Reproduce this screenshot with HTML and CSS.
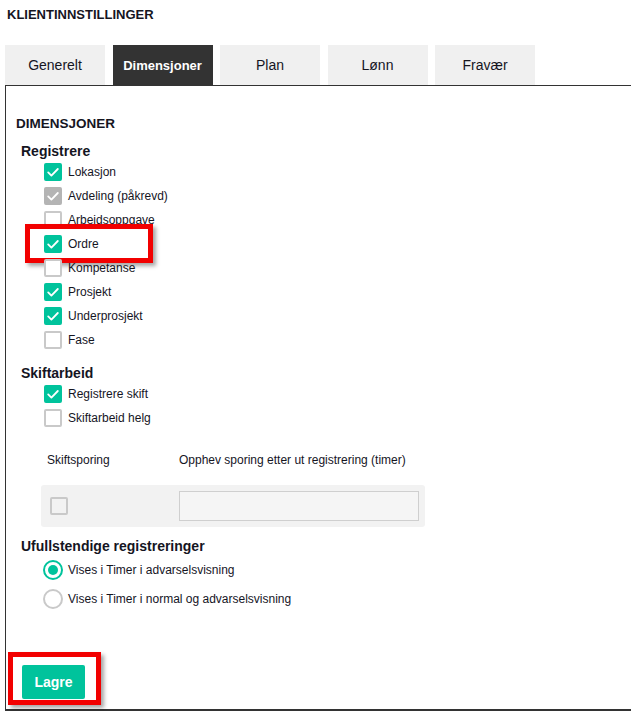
FILE: index.html
```html
<!DOCTYPE html>
<html lang="no">
<head>
  <meta charset="UTF-8">
  <meta name="viewport" content="width=device-width, initial-scale=1.0">
  <title>Klientinnstillinger</title>
  <link rel="stylesheet" href="styles.css">
</head>
<body>
  <!-- Page title -->
  <h1 class="page-title">KLIENTINNSTILLINGER</h1>

  <!-- Tabs -->
  <nav class="tabs">
    <a class="tab">Generelt</a>
    <a class="tab active">Dimensjoner</a>
    <a class="tab">Plan</a>
    <a class="tab">Lønn</a>
    <a class="tab">Fravær</a>
  </nav>

  <!-- Tab panel -->
  <main class="panel">
    <h2 class="panel-title">DIMENSJONER</h2>

    <section class="group">
      <h3 class="group-title">Registrere</h3>
      <label class="check-row"><span class="box checked"><svg viewBox="0 0 18 18"><path d="M4.2 9.4l3.2 3.2L13.8 6"/></svg></span>Lokasjon</label>
      <label class="check-row"><span class="box locked"><svg viewBox="0 0 18 18"><path d="M4.2 9.4l3.2 3.2L13.8 6"/></svg></span>Avdeling (påkrevd)</label>
      <label class="check-row"><span class="box"></span>Arbeidsoppgave</label>
      <label class="check-row"><span class="box checked"><svg viewBox="0 0 18 18"><path d="M4.2 9.4l3.2 3.2L13.8 6"/></svg></span>Ordre<span class="highlight ordre"></span></label>
      <label class="check-row"><span class="box"></span>Kompetanse</label>
      <label class="check-row"><span class="box checked"><svg viewBox="0 0 18 18"><path d="M4.2 9.4l3.2 3.2L13.8 6"/></svg></span>Prosjekt</label>
      <label class="check-row"><span class="box checked"><svg viewBox="0 0 18 18"><path d="M4.2 9.4l3.2 3.2L13.8 6"/></svg></span>Underprosjekt</label>
      <label class="check-row"><span class="box"></span>Fase</label>
    </section>

    <section class="group">
      <h3 class="group-title shift-title">Skiftarbeid</h3>
      <label class="check-row"><span class="box checked"><svg viewBox="0 0 18 18"><path d="M4.2 9.4l3.2 3.2L13.8 6"/></svg></span>Registrere skift</label>
      <label class="check-row"><span class="box"></span>Skiftarbeid helg</label>

      <div class="shift-labels">
        <span class="col-first">Skiftsporing</span>
        <span>Opphev sporing etter ut registrering (timer)</span>
      </div>
      <div class="shift-row">
        <span class="col-first"><span class="box"></span></span>
        <input class="hours-input" type="text">
      </div>
    </section>

    <section class="group">
      <h3 class="group-title radio-title">Ufullstendige registreringer</h3>
      <label class="radio-row"><span class="radio selected"></span>Vises i Timer i advarselsvisning</label>
      <label class="radio-row"><span class="radio"></span>Vises i Timer i normal og advarselsvisning</label>
    </section>

    <div class="actions">
      <button class="save-btn">Lagre<span class="highlight lagre"></span></button>
    </div>
  </main>
</body>
</html>
```

FILE: styles.css
```css
/* Global */
* {
  box-sizing: border-box;
}

body {
  margin: 0;
  width: 631px;
  overflow: hidden;
  font-family: "Liberation Sans", Arial, sans-serif;
  font-size: 12px;
  color: #15151f;
  background: #fff;
}

.page-title {
  margin: 0;
  padding: 8px 0 0 7px;
  font-size: 13px;
  line-height: 14px;
  font-weight: bold;
}

/* Tabs */
.tabs {
  display: flex;
  gap: 7.5px;
  margin: 23px 0 0 5px;
}

.tab {
  width: 100px;
  height: 40px;
  display: flex;
  align-items: center;
  justify-content: center;
  background: #f0f0f0;
  font-size: 14px;
  color: #15151f;
  cursor: pointer;
}

.tab.active {
  background: #333;
  color: #fff;
  font-weight: bold;
  font-size: 13px;
}

/* Panel */
.panel {
  width: 627px;
  height: 626px;
  margin-left: 5px;
  padding: 30px 10px 0 10px;
  border: 1px solid #333;
  border-bottom-width: 2px;
}

.panel-title {
  margin: 0;
  font-size: 13.5px;
  line-height: 16px;
  font-weight: bold;
}

.group {
  margin-left: 5px;
}

.group-title {
  margin: 10px 0 0;
  font-size: 14px;
  line-height: 18px;
  font-weight: bold;
}

.shift-title {
  margin-top: 12px;
}

.radio-title {
  margin-top: 11px;
  line-height: 17px;
}

/* Checkboxes */
.check-row {
  position: relative;
  display: flex;
  align-items: center;
  gap: 6px;
  height: 24px;
  padding-left: 23px;
}

.box {
  width: 18px;
  height: 18px;
  flex: none;
  border: 2px solid #c9c9c9;
  border-radius: 2px;
  background: #fff;
}

.box svg {
  display: block;
  width: 18px;
  height: 18px;
  margin: -2px;
  fill: none;
  stroke: #fff;
  stroke-width: 1.8;
  stroke-linecap: round;
  stroke-linejoin: round;
}

.box.checked {
  background: #00c39c;
  border-color: #00c39c;
}

.box.locked {
  background: #b4b4b4;
  border-color: #b4b4b4;
}

/* Shift tracking */
.shift-labels,
.shift-row {
  display: flex;
  align-items: center;
  width: 384px;
  margin-left: 20px;
}

.shift-labels {
  margin-top: 22px;
  line-height: 16px;
}

.col-first {
  width: 138px;
  flex: none;
  padding-left: 6px;
}

.shift-row {
  height: 42px;
  margin-top: 17px;
  background: #f2f2f2;
  border-radius: 3px;
}

.shift-row .col-first {
  padding-left: 9px;
}

.shift-row .box {
  display: block;
  background: #f2f2f2;
}

.hours-input {
  width: 240px;
  height: 30px;
  border: 1px solid #cfcfcf;
  background: #f5f5f5;
  font: inherit;
}

/* Radios */
.radio-row {
  display: flex;
  align-items: center;
  gap: 5px;
  height: 29px;
  padding-left: 22px;
}

.radio {
  position: relative;
  width: 20px;
  height: 20px;
  flex: none;
  border: 2px solid #c9c9c9;
  border-radius: 50%;
}

.radio.selected {
  border-color: #00c39c;
}

.radio.selected::after {
  content: "";
  position: absolute;
  left: 3px;
  top: 3px;
  width: 10px;
  height: 10px;
  border-radius: 50%;
  background: #00c39c;
}

/* Save */
.actions {
  margin: 52px 0 0 6px;
}

.save-btn {
  position: relative;
  width: 63px;
  height: 34px;
  border: none;
  border-radius: 2px;
  background: #00c39c;
  color: #fff;
  font-family: inherit;
  font-size: 14px;
  font-weight: bold;
  cursor: pointer;
}

/* Red markers over highlighted controls */
.highlight {
  position: absolute;
  border: 5px solid #f20000;
  box-shadow: 3px 3px 4px rgba(0, 0, 0, 0.35);
  pointer-events: none;
}

.highlight.ordre {
  left: 4px;
  top: -8px;
  width: 128px;
  height: 39px;
}

.highlight.lagre {
  left: -14px;
  top: -13px;
  width: 93px;
  height: 53px;
}
```
